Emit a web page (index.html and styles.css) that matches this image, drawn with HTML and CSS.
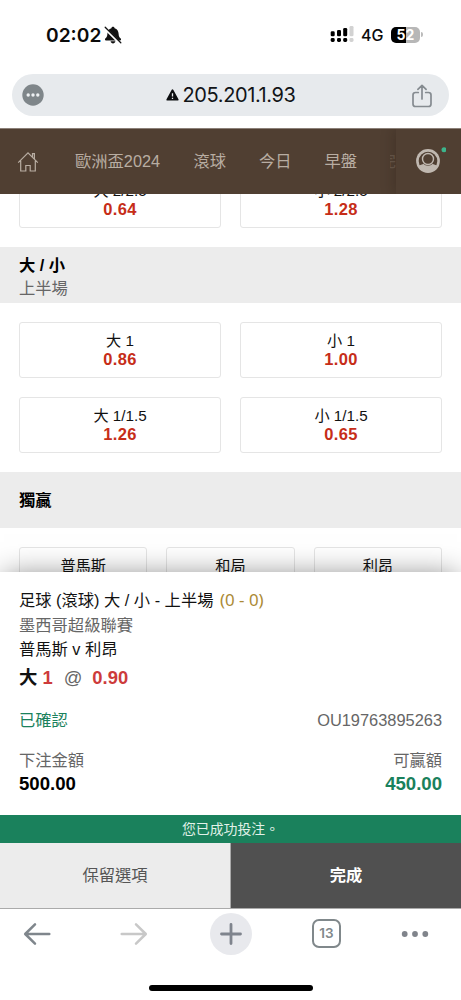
FILE: index.html
```html
<!DOCTYPE html>
<html lang="zh-Hant">
<head>
<meta charset="utf-8">
<meta name="viewport" content="width=device-width, initial-scale=1">
<title>205.201.1.93</title>
<link rel="stylesheet" href="styles.css">
</head>
<body>
<div class="screen">
  <div class="status">
    <span class="clock">02:02</span>
    <svg class="bell" width="18" height="18" viewBox="0 0 18 18">
      <path d="M9 .8c-.9 0-1.500.6-1.600 1.400C4.800 2.900 3.500 5 3.400 7.800c-.1 2.800-.9 3.600-2.100 4.800-.7.700-.3 1.900.6 1.900h14.200c.9 0 1.300-1.200.6-1.900-1.200-1.200-2-2-2.100-4.800-.1-2.800-1.400-4.900-4-5.600C10.500 1.400 9.900.8 9 .8zM6.600 15.300h4.800c-.2 1.400-1.300 2.100-2.400 2.100s-2.200-.7-2.400-2.100z" fill="#111"/>
      <path d="M.8 2.200 15.800 17.200" stroke="#fff" stroke-width="2.600"/>
      <path d="M1.200 1.300 16.800 16.800" stroke="#111" stroke-width="1.300" stroke-linecap="round"/>
    </svg>
    <span class="spacer"></span>
    <svg class="signal" width="24" height="17" viewBox="0 0 24 17">
      <g fill="#000"><rect x=".7" y="5.200" width="4" height="5" rx="1.300"/><rect x="7" y="4" width="4" height="6.200" rx="1.300"/><rect x="13.200" y="2" width="4" height="8.200" rx="1.300"/>
      <rect x=".7" y="12" width="4" height="4" rx="1.400"/><rect x="7" y="12" width="4" height="4" rx="1.400"/><rect x="13.200" y="12" width="4" height="4" rx="1.400"/></g>
      <g fill="#d2d2d2"><rect x="19.500" y="0" width="4" height="10.200" rx="1.300"/><rect x="19.500" y="12" width="4" height="4" rx="1.400"/></g>
    </svg>
    <span class="net">4G</span>
    <span class="battery">52</span><span class="cap"></span>
  </div>

  <div class="address">
    <svg width="22" height="22" viewBox="0 0 22 22"><circle cx="11" cy="11" r="10.700" fill="#7f868a"/><g fill="#eef1f3"><circle cx="6.200" cy="11" r="1.700"/><circle cx="11" cy="11" r="1.700"/><circle cx="15.800" cy="11" r="1.700"/></g></svg>
    <div class="url">
      <svg width="13" height="12" viewBox="0 0 13 12"><path d="M6.500 1.300 11.700 10.700H1.300z" fill="#0c0e10" stroke="#0c0e10" stroke-width="1.800" stroke-linejoin="round"/><path d="M6.500 4.200v3.200M6.500 8.700v1.400" stroke="#e8ebee" stroke-width="1.300"/></svg>
      <span>205.201.1.93</span>
    </div>
    <svg class="share" width="20" height="24" viewBox="0 0 20 24" fill="none" stroke="#858b90" stroke-width="1.700" stroke-linecap="round" stroke-linejoin="round"><path d="M6.300 8.500H3.500Q1 8.500 1 11v9q0 2.500 2.500 2.500h13Q19 22.500 19 20v-9q0-2.500-2.500-2.500h-2.800M10 15V1.500M5.900 5.400 10 1.400l4.100 4"/></svg>
  </div>

  <nav class="nav">
    <svg class="home" width="22" height="22" viewBox="0 0 22 22" fill="none" stroke="#b8ada2" stroke-width="1.200"><path d="M1.200 11.700 11 1.800l9.800 9.900M3.700 9.800V20h5.100v-5.500h4.400V20h5.100V9.800M15.500 6V2.700h1.900v5.200"/></svg>
    <span class="link euro">歐洲盃2024</span>
    <span class="link live">滾球</span>
    <span class="link today">今日</span>
    <span class="link early">早盤</span>
    <span class="link cut">完</span>
    <div class="account">
      <svg width="32" height="32" viewBox="0 0 32 32"><circle cx="14" cy="16" r="11.900" fill="#c0b8b0"/><circle cx="14" cy="16" r="9.300" fill="#503f32"/><path d="M5 20.500Q9 18.600 14 18.600t9 1.900Q20 26 14 26t-9-5.500z" fill="#c0b8b0"/><circle cx="14" cy="14" r="6.800" fill="#503f32"/><circle cx="14" cy="14" r="5.500" fill="none" stroke="#c0b8b0" stroke-width="1.400"/><circle cx="30" cy="4.700" r="2.500" fill="#3cb58c"/></svg>
    </div>
  </nav>

  <main class="market">
    <div class="odds two clipped">
      <div class="card"><span>大 2/2.5</span><b>0.64</b></div>
      <div class="card"><span>小 2/2.5</span><b>1.28</b></div>
    </div>
    <div class="heading"><b>大 / 小</b><span>上半場</span></div>
    <div class="odds two">
      <div class="card"><span>大 1</span><b>0.86</b></div>
      <div class="card"><span>小 1</span><b>1.00</b></div>
      <div class="card"><span>大 1/1.5</span><b>1.26</b></div>
      <div class="card"><span>小 1/1.5</span><b>0.65</b></div>
    </div>
    <div class="heading single"><b>獨贏</b></div>
    <div class="odds three">
      <div class="card"><span>普馬斯</span></div>
      <div class="card"><span>和局</span></div>
      <div class="card"><span>利昂</span></div>
    </div>
  </main>

  <section class="slip">
    <div class="line title">足球 (滾球) 大 / 小 - 上半場 <span class="score">(0 - 0)</span></div>
    <div class="line muted">墨西哥超級聯賽</div>
    <div class="line">普馬斯 v 利昂</div>
    <div class="pick"><b>大</b><b class="red">1</b><span class="at">@</span><b class="red">0.90</b></div>
    <div class="pair confirm"><span class="green">已確認</span><span class="muted serial">OU19763895263</span></div>
    <div class="pair muted"><span>下注金額</span><span>可贏額</span></div>
    <div class="pair money"><b>500.00</b><b class="green">450.00</b></div>
  </section>
  <div class="toast">您已成功投注。</div>
  <div class="actions"><div class="keep">保留選項</div><div class="done">完成</div></div>

  <footer class="toolbar">
    <div class="tools">
      <svg width="28" height="24" viewBox="0 0 28 24" fill="none" stroke="#7f868c" stroke-width="2.500" stroke-linecap="round" stroke-linejoin="round"><path d="M12 2.300 2.200 12 12 21.700M2.500 12h23.800"/></svg>
      <svg class="forward" width="28" height="24" viewBox="0 0 28 24" fill="none" stroke="#c8c8c8" stroke-width="2.500" stroke-linecap="round" stroke-linejoin="round"><path d="M16 2.300 25.800 12 16 21.700M25.500 12H1.700"/></svg>
      <svg class="plus" width="42" height="42" viewBox="0 0 42 42"><circle cx="21" cy="21" r="21" fill="#e8e9ed"/><path d="M21 11.500v19M11.500 21h19" stroke="#7f848d" stroke-width="2.800" stroke-linecap="round"/></svg>
      <span class="tabs">13</span>
      <svg class="more" width="28" height="8" viewBox="0 0 28 8" fill="#80848b"><circle cx="3.700" cy="4" r="2.900"/><circle cx="14" cy="4" r="2.900"/><circle cx="24.300" cy="4" r="2.900"/></svg>
    </div>
    <div class="indicator"></div>
  </footer>
</div>
</body>
</html>
```

FILE: styles.css
```css
* { box-sizing: border-box; }
body { margin: 0; background: #fff; color: #111; font: 16.300px "Liberation Sans", "Noto Sans CJK TC", sans-serif; }
svg { display: block; flex: none; }
.screen { width: 461px; height: 1000px; overflow: hidden; display: flex; flex-direction: column; }
.screen > * { flex: none; }
.green { color: #1a815c; }
.muted { color: #666; }

.status { height: 74px; display: flex; align-items: center; padding: 0 38px 5px 46px; font-family: Inter, sans-serif; color: #0b0b0b; }
.clock { font-size: 19.200px; font-weight: 600; width: 58px; white-space: nowrap; }
.spacer { flex: 1; }
.signal { margin-right: 7px; }
.net { font-size: 16px; font-weight: 500; width: 22px; margin-right: 8px; white-space: nowrap; }
.battery { width: 29px; height: 16px; border-radius: 5px; background: linear-gradient(90deg, #000 52%, #b7b7b7 52%); color: #fff; font-size: 14px; line-height: 16px; font-weight: 700; text-align: center; }
.cap { width: 2px; height: 5px; margin-left: 1px; border-radius: 0 2px 2px 0; background: #bbb; }

.address { height: 42px; margin: 0 12px 12px; padding: 0 17px 0 10px; border-radius: 21px; background: #e7eaed; display: flex; align-items: center; justify-content: space-between; }
.url { display: flex; align-items: center; gap: 4px; margin-left: 5px; font: 20px/24px Inter, sans-serif; letter-spacing: -0.400px; color: #111417; }
.share { margin-top: 2px; }

.nav { height: 66px; border-top: 1px solid #8b8078; background: #503f32; display: flex; align-items: center; padding-left: 17px; color: #b8ada2; line-height: 20px; overflow: hidden; }
.link { white-space: nowrap; margin-top: -1px; }
.euro { margin-left: 36px; width: 118.500px; }
.live, .today, .early { width: 65.500px; }
.cut { width: 6px; overflow: hidden; opacity: .2; direction: rtl; }
.account { margin-left: auto; width: 65px; height: 65px; padding: 16px 0 0 18px; box-shadow: -2px 0 12px rgba(30, 18, 10, .25); }

.market { height: 377.500px; overflow: hidden; }
.odds { display: grid; gap: 19px; padding: 19px; }
.two { grid-template-columns: 1fr 1fr; }
.three { grid-template-columns: 1fr 1fr 1fr; }
.clipped { padding-top: 0; margin-top: -22px; }
.card { height: 56px; border: 1px solid #e5e5e5; border-radius: 3px; padding-top: 8px; display: flex; flex-direction: column; align-items: center; font-size: 15.200px; line-height: 19px; }
.card b { color: #c62d18; font-size: 16.500px; letter-spacing: .300px; }
.heading { height: 56px; padding: 4px 19px 0; background: #ececec; display: flex; flex-direction: column; justify-content: center; line-height: 23px; color: #000; }
.single { padding-top: 1px; }
.heading span { color: #666; }

.slip { height: 243px; padding: 16.500px 19px 0; background: #fff; box-shadow: 0 0 28px -4px rgba(0, 0, 0, .5); position: relative; }
.line { line-height: 24.600px; white-space: pre; }
.score { color: #ab8a34; font-family: "Noto Sans", sans-serif; font-size: 16.900px; margin-left: 2px; }
.pick { display: flex; line-height: 32px; font-size: 18.400px; }
.red { color: #cd3b3b; margin-left: 5px; }
.at { margin: 0 5px 0 11px; color: #666; }
.pair { display: flex; justify-content: space-between; line-height: 23px; }
.serial { font-size: 16.400px; }
.confirm { margin: 15px 0 17.500px; }
.money { font-size: 18.600px; line-height: 23px; color: #000; }

.toast { height: 28px; background: #1a815c; color: #e1f1e9; font-size: 13.900px; line-height: 28px; text-align: center; position: relative; }
.actions { height: 66px; display: flex; border-bottom: 1px solid #aaa; line-height: 65px; text-align: center; position: relative; }
.keep { flex: 1; background: #ececec; color: #555; border-right: 1px solid #aaa; }
.done { flex: 1; background: #505050; color: #fff; font-weight: 600; }

.toolbar { height: 92px; padding: 4px 31px 0 23px; background: #fff; position: relative; }
.tools { height: 42px; display: flex; align-items: center; }
.forward { margin-left: 69px; }
.plus { margin-left: 61.500px; }
.tabs { width: 29px; height: 29px; margin-left: 60.500px; border: 2px solid #80888b; border-radius: 7px; color: #80888b; font: 600 13.500px/25px Inter, sans-serif; text-align: center; }
.more { margin-left: 59.500px; }
.indicator { width: 164px; height: 6px; margin: 30px 0 0 126px; background: #000; border-radius: 3px; }
```
